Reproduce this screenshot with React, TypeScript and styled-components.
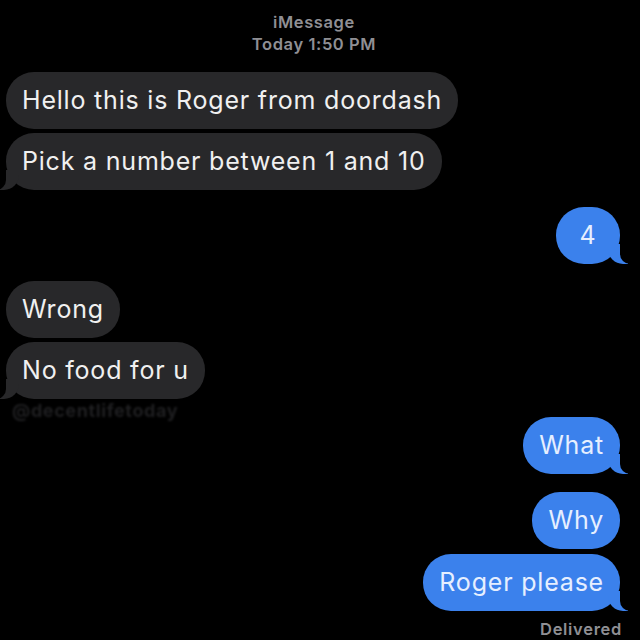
import React from "react";
import styled, { createGlobalStyle, css } from "styled-components";

const GlobalStyle = createGlobalStyle`
  html, body {
    margin: 0;
    padding: 0;
    background: #000;
  }
  body {
    font-family: Inter, "Liberation Sans", Arial, sans-serif;
  }
`;

const Screen = styled.div`
  width: 640px;
  height: 640px;
  overflow: hidden;
  background: #000;
  display: flex;
  flex-direction: column;
  padding: 0 20px 0 6px;
  box-sizing: border-box;
`;

const Header = styled.div`
  display: flex;
  flex-direction: column;
  align-items: center;
  flex-shrink: 0;
  padding: 11px 0 0 0;
  margin-right: -2px;
  color: #8f8f94;
  font-size: 16.5px;
  font-weight: 600;
  letter-spacing: 0.6px;
  line-height: 22px;
  height: 72px;
  box-sizing: border-box;
`;

const Row = styled.div<{ $mine?: boolean; $gap: number }>`
  display: flex;
  flex-shrink: 0;
  justify-content: ${(p) => (p.$mine ? "flex-end" : "flex-start")};
  margin-top: ${(p) => p.$gap}px;
`;

const Bubble = styled.div<{ $mine?: boolean; $tail?: boolean }>`
  position: relative;
  display: inline-flex;
  align-items: center;
  justify-content: center;
  min-width: 64px;
  height: 57px;
  box-sizing: border-box;
  padding: 0 16px 1px 16px;
  border-radius: 28px;
  font-size: 25px;
  letter-spacing: 0.8px;
  white-space: nowrap;
  background: ${(p) => (p.$mine ? "#3b81ec" : "#28282a")};
  color: ${(p) => (p.$mine ? "#e6efff" : "#f0f0f0")};

  ${(p) =>
    p.$tail &&
    (p.$mine
      ? css`
          &::before {
            content: "";
            position: absolute;
            bottom: 0;
            right: -8px;
            width: 20px;
            height: 20px;
            background: #3b81ec;
            border-bottom-left-radius: 15px;
          }
          &::after {
            content: "";
            position: absolute;
            bottom: 0;
            right: -10px;
            width: 10px;
            height: 20px;
            background: #000;
            border-bottom-left-radius: 10px;
          }
        `
      : css`
          &::before {
            content: "";
            position: absolute;
            bottom: 0;
            left: -7px;
            width: 20px;
            height: 20px;
            background: #28282a;
            border-bottom-right-radius: 15px;
          }
          &::after {
            content: "";
            position: absolute;
            bottom: 0;
            left: -10px;
            width: 10px;
            height: 20px;
            background: #000;
            border-bottom-right-radius: 10px;
          }
        `)}
`;

const Watermark = styled.div`
  flex-shrink: 0;
  height: 18px;
  line-height: 24px;
  padding-left: 6px;
  color: #1f1f21;
  font-size: 18px;
  font-weight: 700;
  letter-spacing: 0.6px;
  filter: blur(1.3px);
`;

const Delivered = styled.div`
  flex-shrink: 0;
  margin-top: 8px;
  text-align: right;
  margin-right: -2px;
  line-height: 20px;
  color: #8f8f94;
  font-size: 16.5px;
  font-weight: 600;
  letter-spacing: 0.7px;
`;

type Msg = { text: string; mine?: boolean; tail?: boolean; gap: number };

const before: Msg[] = [
  { text: "Hello this is Roger from doordash", gap: 0 },
  { text: "Pick a number between 1 and 10", tail: true, gap: 4 },
  { text: "4", mine: true, tail: true, gap: 17 },
  { text: "Wrong", gap: 17 },
  { text: "No food for u", tail: true, gap: 4 },
];

const after: Msg[] = [
  { text: "What", mine: true, tail: true, gap: 0 },
  { text: "Why", mine: true, gap: 18 },
  { text: "Roger please", mine: true, tail: true, gap: 5 },
];

const renderMsg = (m: Msg, i: number) => (
  <Row key={i} $mine={m.mine} $gap={m.gap}>
    <Bubble $mine={m.mine} $tail={m.tail}>
      {m.text}
    </Bubble>
  </Row>
);

export default function App() {
  return (
    <>
      <GlobalStyle />
      <Screen>
        <Header>
          <span>iMessage</span>
          <span>Today 1:50 PM</span>
        </Header>
        {before.map(renderMsg)}
        <Watermark>@decentlifetoday</Watermark>
        {after.map(renderMsg)}
        <Delivered>Delivered</Delivered>
      </Screen>
    </>
  );
}
